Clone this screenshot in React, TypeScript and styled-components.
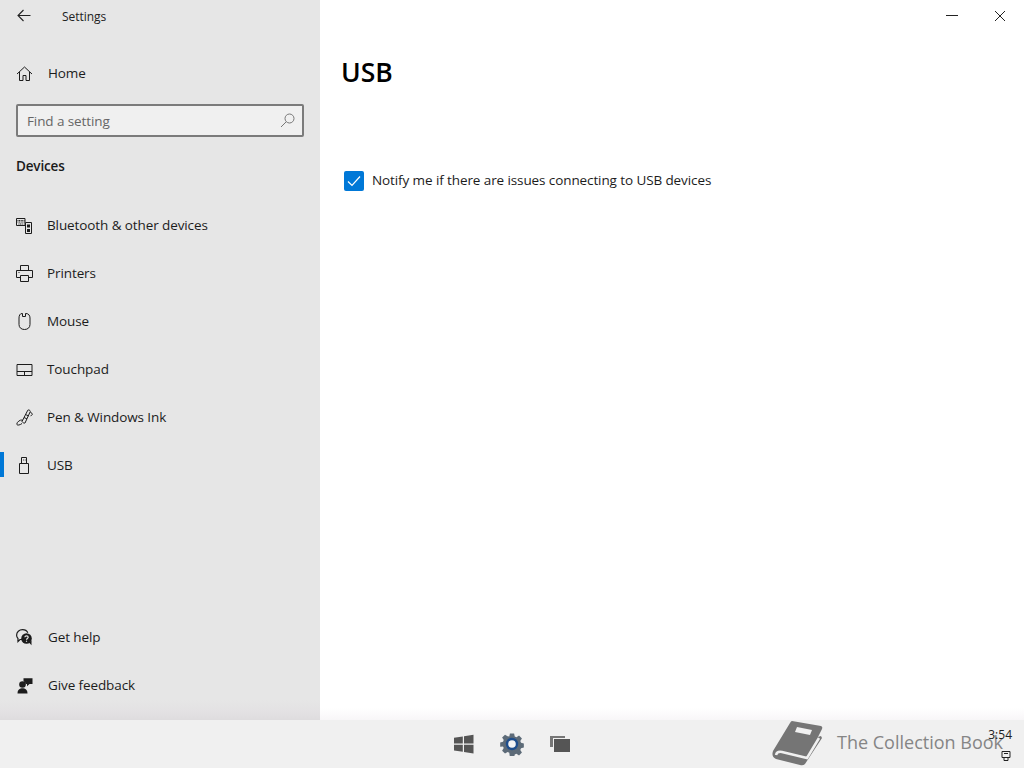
import React from "react"
import styled, { createGlobalStyle } from "styled-components"

const GlobalStyle = createGlobalStyle`
  html, body {
    margin: 0;
    padding: 0;
    background: #ffffff;
  }

  body {
    font-family: "Open Sans", "Noto Sans", "Liberation Sans", sans-serif;
    color: #1a1a1a;
  }
`

const Page = styled.div`
  display: flex;
  flex-direction: column;
  width: 1024px;
  height: 768px;
  overflow: hidden;
`

const Window = styled.div`
  display: flex;
  height: 720px;
  flex-shrink: 0;
`

const Sidebar = styled.aside`
  display: flex;
  flex-direction: column;
  width: 320px;
  flex-shrink: 0;
  padding-bottom: 11px;
  box-sizing: border-box;
  background: linear-gradient(#e6e6e6 0, #e6e6e6 700px, #e3e1e3 712px, #dedcde 720px);
`

const TitleBar = styled.div`
  display: flex;
  align-items: center;
  height: 32px;
  padding-left: 16px;
`

const BackIcon = styled.svg`
  width: 16px;
  height: 16px;
  margin-right: 30px;
  color: #222;
`

const AppTitle = styled.span`
  font-size: 12px;
  letter-spacing: -0.05px;
  color: #222;
`

const NavRow = styled.div<{ $active?: boolean; $top?: number }>`
  position: relative;
  display: flex;
  align-items: center;
  height: 48px;
  padding-left: 16px;
  margin-top: ${(p) => p.$top ?? 0}px;
  color: #1c1c1c;

  &::before {
    content: "";
    display: ${(p) => (p.$active ? "block" : "none")};
    position: absolute;
    left: 0;
    top: 11px;
    width: 4px;
    height: 25px;
    background: #0078d7;
  }
`

const NavIcon = styled.svg`
  width: 17px;
  height: 17px;
  margin-right: 14px;
  flex-shrink: 0;
  color: #1c1c1c;
`

const NavLabel = styled.span<{ $inset?: boolean }>`
  margin-left: ${(p) => (p.$inset ? 1 : 0)}px;
  margin-bottom: 1px;
  font-size: 13.5px;
  letter-spacing: -0.1px;
`

const SearchBox = styled.div`
  display: flex;
  align-items: center;
  justify-content: space-between;
  box-sizing: border-box;
  width: 288px;
  height: 33px;
  margin: 7px 0 0 16px;
  padding: 0 7px 0 9px;
  background: #f0f0f0;
  border: 2px solid #7b7b7b;
  border-radius: 2px;
  font-size: 13.5px;
  letter-spacing: -0.1px;
  color: #666;
`

const SearchIcon = styled.svg`
  width: 15px;
  height: 15px;
  color: #777;
`

const SectionTitle = styled.h2`
  margin: 13px 0 19px 16px;
  height: 32px;
  line-height: 32px;
  font-size: 13.5px;
  font-weight: 600;
  letter-spacing: -0.15px;
  color: #1a1a1a;
`

const Spacer = styled.div`
  flex: 1;
`

const Content = styled.main`
  display: flex;
  flex-direction: column;
  flex: 1;
  background: linear-gradient(#ffffff 0, #ffffff 708px, #f8f6f8 720px);
`

const WindowControls = styled.div`
  display: flex;
  justify-content: flex-end;
  height: 32px;
`

const ControlButton = styled.div`
  display: flex;
  align-items: center;
  justify-content: center;
  width: 48px;
  height: 32px;
  color: #222;
`

const PageTitle = styled.h1`
  margin: 16px 0 0 21px;
  height: 48px;
  line-height: 48px;
  font-size: 26.5px;
  font-weight: 600;
  color: #000;
`

const CheckRow = styled.label`
  display: flex;
  align-items: center;
  gap: 8px;
  margin: 75px 0 0 24px;
  color: #1c1c1c;
`

const CheckLabel = styled.span`
  margin-bottom: 2px;
  font-size: 13.5px;
  letter-spacing: -0.1px;
`

const CheckBox = styled.span`
  display: flex;
  align-items: center;
  justify-content: center;
  width: 20px;
  height: 20px;
  border-radius: 2px;
  background: #0078d7;
`

const Taskbar = styled.footer`
  position: relative;
  display: flex;
  align-items: center;
  height: 48px;
  flex-shrink: 0;
  background: #f0f0f0;
`

const TaskIcons = styled.div`
  display: flex;
  align-items: center;
  gap: 24px;
  margin-left: 452px;
`

const TaskIcon = styled.svg`
  width: 24px;
  height: 24px;
  flex-shrink: 0;
`

const Brand = styled.div`
  display: flex;
  align-items: center;
  gap: 14px;
  margin-left: auto;
  padding-right: 21px;
  color: #858585;
`

const BrandIcon = styled.svg`
  width: 51px;
  height: 48px;
  flex-shrink: 0;
  color: #757575;
`

const BrandName = styled.span`
  margin-bottom: 5px;
  font-size: 18px;
`

const Clock = styled.span`
  position: absolute;
  right: 12px;
  top: 6px;
  font-size: 12px;
  color: #222;
`

const TrayIcon = styled.svg`
  position: absolute;
  right: 13px;
  top: 30px;
  width: 10px;
  height: 12px;
  color: #222;
`

const strokeProps = {
  fill: "none",
  stroke: "currentColor",
  strokeWidth: 1,
  viewBox: "0 0 17 17",
}

function HomeIcon() {
  return (
    <NavIcon {...strokeProps}>
      <path d="M1 9 8.500 2 16 9" />
      <path d="M3.500 7v8.500h3.500V10.500h3v5h3.500V7" />
    </NavIcon>
  )
}

function DevicesIcon() {
  return (
    <NavIcon {...strokeProps}>
      <path d="M.5 1.500h8.500v7H.5z" />
      <path d="M1.500 3.500h7M1.500 5h7M2.500 7h5" strokeDasharray="1 .6" />
      <path d="M9.500 5.500h6v11h-6z" fill="#e6e6e6" />
      <path d="M11 7.500h3v3h-3zM11 12h3v3h-3z" fill="currentColor" stroke="none" />
    </NavIcon>
  )
}

function PrinterIcon() {
  return (
    <NavIcon {...strokeProps}>
      <path d="M4.500 5.500V.5h8v5" />
      <path d="M4.500 12.500h-4v-7h16v7h-4" />
      <path d="M4.500 10.500h8v6h-8z" />
      <path d="M2.500 7.500h1" />
    </NavIcon>
  )
}

function MouseIcon() {
  return (
    <NavIcon {...strokeProps}>
      <path d="M3 5C3 2.500 4 .5 6 .5h.5v3h3v-3h.5c2.500 0 4 2 4 4.500v6.500c0 3-2.200 5-5.500 5S3 14.500 3 11.500z" />
    </NavIcon>
  )
}

function TouchpadIcon() {
  return (
    <NavIcon {...strokeProps}>
      <path d="M1 3.500h15v11H1z" />
      <path d="M1 10.500h15M8.500 10.500v4" />
    </NavIcon>
  )
}

function PenIcon() {
  return (
    <NavIcon {...strokeProps}>
      <path d="M6 12.500 11.800 1.200c.4-.8 2.900.3 2.500 1.300L9 14" />
      <path d="M6 12.500c.5 1 2.200 2 3 1.500M8 8.500l3 1.400M9.500 5.500l3 1.400" />
      <path d="M14.500 3l2 2.200-2 2" />
      <path d="M6.500 11C4 10.500 1 13 .8 15c-.1 1.500 2.700 1.500 5.200-.5" />
    </NavIcon>
  )
}

function UsbIcon() {
  return (
    <NavIcon {...strokeProps}>
      <path d="M3.500 6.500h9v10h-9z" />
      <path d="M5.500 6.500V.5h5v6" />
      <path d="M7 3h.8M8.800 3h.8" />
    </NavIcon>
  )
}

function HelpIcon() {
  return (
    <NavIcon viewBox="0 0 17 17" fill="none" stroke="currentColor" strokeWidth={1.2}>
      <path d="M6 10.500c-1 0-1.500 0-2 0L2 12.500v-3C1 8.500.6 7.500.6 6.200.6 3 3.200.7 6.500.7c2.500 0 4.500 1.200 5.300 3" />
      <circle cx="10.500" cy="9.500" r="5.300" fill="currentColor" stroke="none" />
      <path d="M13 13.500l2.500 2.800v-4.500z" fill="currentColor" stroke="none" />
      <path d="M8.800 8.200c.2-1.800 3.400-1.800 3.400 0 0 1.200-1.700 1.200-1.700 2.500" stroke="#e6e6e6" />
      <path d="M10.500 11.700v1.100" stroke="#e6e6e6" />
    </NavIcon>
  )
}

function FeedbackIcon() {
  return (
    <NavIcon viewBox="0 0 17 17" fill="currentColor">
      <circle cx="6.500" cy="7.500" r="3.300" />
      <path d="M1.500 16.500c0-3.800 2.200-5.200 5-5.200s5 1.400 5 5.200z" />
      <path d="M7.500 1.200h9v5.800h-3l-2.500 2.300V7H9.500c0-1.200-1-2.200-2-2.700z" />
    </NavIcon>
  )
}

export default function App() {
  return (
    <>
      <GlobalStyle />
      <Page>
        <Window>
          <Sidebar>
            <TitleBar>
              <BackIcon viewBox="0 0 16 16" fill="none" stroke="currentColor" strokeWidth={1.1}>
                <path d="M2.500 7.500h12M7.500 2 2 7.500 7.500 13" />
              </BackIcon>
              <AppTitle>Settings</AppTitle>
            </TitleBar>

            <NavRow $top={17}>
              <HomeIcon />
              <NavLabel $inset>Home</NavLabel>
            </NavRow>

            <SearchBox>
              Find a setting
              <SearchIcon viewBox="0 0 15 15" fill="none" stroke="currentColor" strokeWidth={1}>
                <circle cx="9.500" cy="5.500" r="4.500" />
                <path d="M6.200 8.800 1 14" />
              </SearchIcon>
            </SearchBox>

            <SectionTitle>Devices</SectionTitle>

            <NavRow>
              <DevicesIcon />
              <NavLabel>Bluetooth &amp; other devices</NavLabel>
            </NavRow>
            <NavRow>
              <PrinterIcon />
              <NavLabel>Printers</NavLabel>
            </NavRow>
            <NavRow>
              <MouseIcon />
              <NavLabel>Mouse</NavLabel>
            </NavRow>
            <NavRow>
              <TouchpadIcon />
              <NavLabel>Touchpad</NavLabel>
            </NavRow>
            <NavRow>
              <PenIcon />
              <NavLabel>Pen &amp; Windows Ink</NavLabel>
            </NavRow>
            <NavRow $active>
              <UsbIcon />
              <NavLabel>USB</NavLabel>
            </NavRow>

            <Spacer />

            <NavRow>
              <HelpIcon />
              <NavLabel $inset>Get help</NavLabel>
            </NavRow>
            <NavRow>
              <FeedbackIcon />
              <NavLabel $inset>Give feedback</NavLabel>
            </NavRow>
          </Sidebar>

          <Content>
            <WindowControls>
              <ControlButton>
                <svg width="12" height="12" viewBox="0 0 12 12" stroke="currentColor">
                  <path d="M0 5.500h12" />
                </svg>
              </ControlButton>
              <ControlButton>
                <svg width="12" height="12" viewBox="0 0 12 12" stroke="currentColor" fill="none">
                  <path d="M1 1l10 10M11 1 1 11" />
                </svg>
              </ControlButton>
            </WindowControls>

            <PageTitle>USB</PageTitle>

            <CheckRow>
              <CheckBox>
                <svg width="14" height="12" viewBox="0 0 14 12" fill="none" stroke="#fff" strokeWidth={1.2}>
                  <path d="M1 6.500 5 10.500 13 1.500" />
                </svg>
              </CheckBox>
              <CheckLabel>Notify me if there are issues connecting to USB devices</CheckLabel>
            </CheckRow>
          </Content>
        </Window>

        <Taskbar>
          <TaskIcons>
            <TaskIcon viewBox="0 0 24 24" fill="#555">
              <path d="M2 5.800 10.800 4.400v7.100H2zM12 4.200 21.500 2.800v8.700H12zM2 12.700h8.800v7.100L2 18.500zM12 12.700h9.500v8.700L12 20z" />
            </TaskIcon>
            <TaskIcon viewBox="0 0 24 24">
              <path
                fill="#5d6b78"
                d="M9.700.5h4.600l.7 3.200 1.900.8 2.800-1.800 3.200 3.200-1.800 2.800.8 1.900 3.100.7v4.600l-3.100.7-.8 1.900 1.800 2.800-3.200 3.200-2.800-1.800-1.900.8-.7 3.200H9.700L9 21.500l-1.900-.8-2.800 1.800-3.200-3.200 1.800-2.800-.8-1.900L-1 14.900v-4.600l3.100-.7.800-1.900-1.800-2.800 3.200-3.200 2.800 1.800L9 3.700z"
                transform="translate(1.100 1.100) scale(.91)"
              />
              <circle cx="12" cy="12" r="6.200" fill="#1f4e8c" />
              <circle cx="12" cy="12" r="3.800" fill="#f4f4f4" />
            </TaskIcon>
            <TaskIcon viewBox="0 0 24 24" fill="#555">
              <path d="M2 4h15v2H5v9H2z" fill="#777" />
              <path d="M6 7h16v13H6z" />
            </TaskIcon>
          </TaskIcons>

          <Brand>
            <BrandIcon viewBox="0 0 51 48" fill="currentColor">
              <path d="M20 1 49 6Q51 7 50 9L46 17 49 16 50 18 33 44Q31 46 28 45L4 39Q-1 37 1 31L18 3Q19 1 20 1Z" />
              <path d="M4 35Q5 31 10 32L35 38 47 18" fill="none" stroke="#f0f0f0" strokeWidth={2.500} />
              <path d="M25 7 40 10 38 15 23 12Z" fill="#f0f0f0" />
            </BrandIcon>
            <BrandName>The Collection Book</BrandName>
          </Brand>

          <Clock>3:54</Clock>
          <TrayIcon viewBox="0 0 10 12" fill="none" stroke="currentColor" strokeWidth={1}>
            <path d="M1 1.500h8v6H1zM3 7.500v3h4v-3M3 3.500h4" />
          </TrayIcon>
        </Taskbar>
      </Page>
    </>
  )
}
